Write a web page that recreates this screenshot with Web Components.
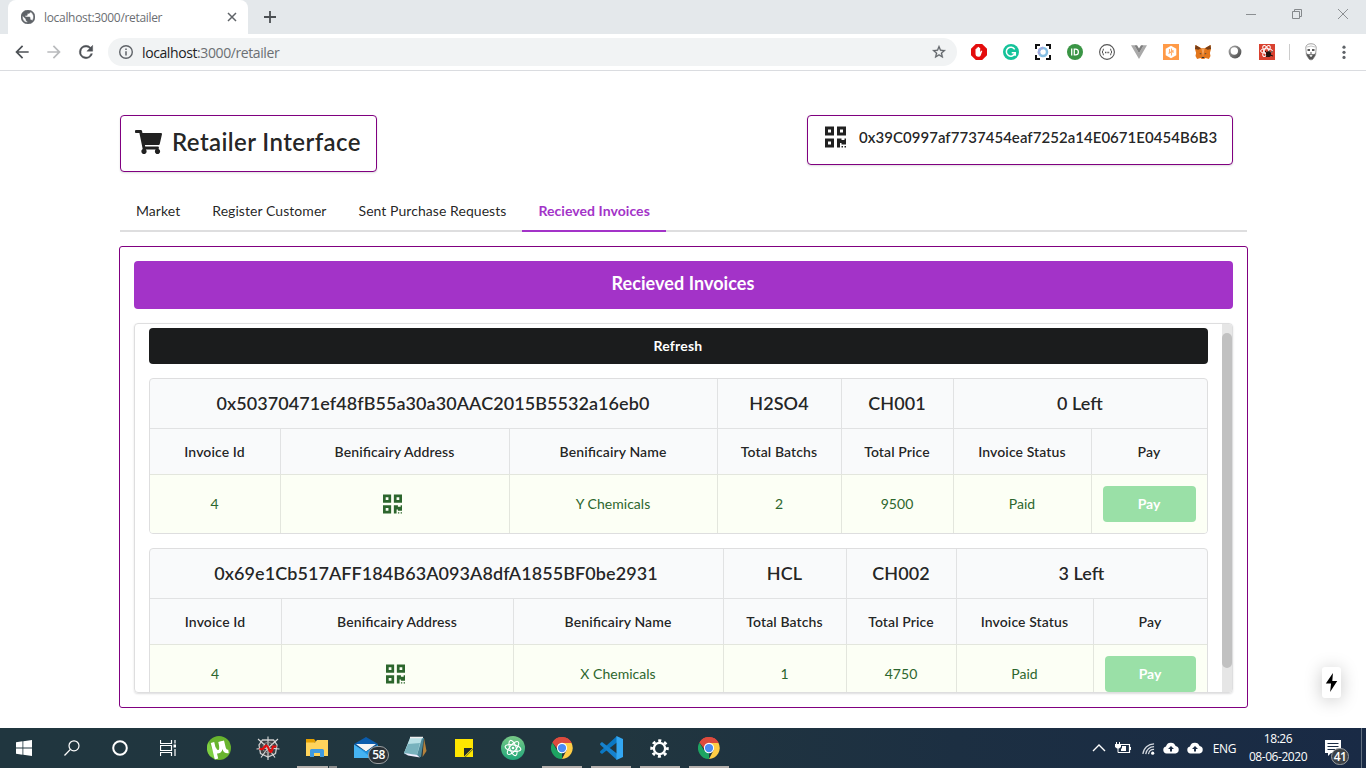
<!DOCTYPE html>
<html lang="en">
<head>
<meta charset="utf-8">
<title>localhost:3000/retailer</title>
<style>
html,body{margin:0;height:100%;overflow:hidden;background:#fff}
body{font-family:Lato,"Liberation Sans",sans-serif;font-size:14px;color:rgba(0,0,0,.87);font-feature-settings:"liga" 1}
</style>
</head>
<body>
<desktop-screen></desktop-screen>
<script>
const ICONS = {
  globe:['2 2 20 20','<path fill="#5f6368" stroke="#5f6368" stroke-width=".7" d="M12 2C6.480 2 2 6.480 2 12s4.480 10 10 10 10-4.480 10-10S17.520 2 12 2zm-1 17.930c-3.950-.49-7-3.850-7-7.930 0-.62.08-1.210.21-1.790L9 15v1c0 1.100.9 2 2 2v1.930zm6.900-2.540c-.26-.81-1-1.390-1.900-1.390h-1v-3c0-.55-.45-1-1-1H8v-2h2c.55 0 1-.45 1-1V7h2c1.100 0 2-.9 2-2v-.41c2.930 1.190 5 4.060 5 7.410 0 2.080-.8 3.970-2.100 5.390z"/>'],
  close:['0 0 10 10','<path d="M1 1 9 9M9 1 1 9" fill="none" stroke="#5f6368" stroke-width="1.5"/>'],
  plus:['0 0 14 14','<path d="M7 1V13M1 7H13" fill="none" stroke="#4b4f53" stroke-width="1.8"/>'],
  min:['0 0 12 12','<path d="M1 6.500H11" stroke="#8b8f92"/>'],
  restore:['0 0 12 12','<path d="M1.500 3.500H8.500V10.500H1.500ZM3.500 3.500V1.500H10.500V8.500H8.500" fill="none" stroke="#85898c"/>'],
  winclose:['0 0 12 12','<path d="M1 1 11 11M11 1 1 11" fill="none" stroke="#8b8f92"/>'],
  back:['0 0 24 24','<path fill="#4d5156" d="M20 11H7.830l5.590-5.590L12 4l-8 8 8 8 1.410-1.410L7.830 13H20v-2z"/>'],
  forward:['0 0 24 24','<path fill="#b9bbbd" d="M12 4l-1.410 1.410L16.170 11H4v2h12.170l-5.580 5.590L12 20l8-8z"/>'],
  reload:['0 0 24 24','<path fill="#4d5156" d="M17.650 6.350A7.960 7.960 0 0 0 12 4a8 8 0 1 0 7.730 10h-2.080A6 6 0 1 1 12 6c1.660 0 3.140.69 4.220 1.780L13 11h7V4z" stroke="#4d5156" stroke-width=".5"/>'],
  info:['0 0 16 16','<circle cx="8" cy="8" r="6.300" fill="none" stroke="#5f6368" stroke-width="1.400"/><path d="M8 7.200V11.600M8 4.400V6" stroke="#5f6368" stroke-width="1.500"/>'],
  star:['0 0 24 24','<path fill="#5f6368" stroke="#5f6368" stroke-width=".4" d="M22 9.240l-7.190-.62L12 2 9.190 8.630 2 9.240l5.460 4.730L5.820 21 12 17.270 18.180 21l-1.630-7.030L22 9.240zM12 15.400l-3.760 2.270 1-4.280-3.320-2.880 4.380-.38L12 6.100l1.710 4.040 4.380.38-3.320 2.880 1 4.280L12 15.400z"/>'],
  adblock:['0 0 16 16','<path fill="#e40d0d" d="M4.800 0h6.400L16 4.800v6.400L11.200 16H4.800L0 11.200V4.800Z"/><path fill="#fff" d="M4.500 8.400V5.200q.5-.7 1 0V4q.7-.8 1.200 0V3.200q.7-.8 1.300 0V4q.7-.8 1.200 0v4l1.200-1.300q.8-.3.9.3L9.800 11.200Q9.300 12.800 7.500 12.800 4.500 12.800 4.500 9.500Z"/>'],
  grammar:['0 0 16 16','<circle cx="8" cy="8" r="8" fill="#15c39a"/><path d="M11.700 5.300A4.500 4.500 0 1 0 12 9.400M8.700 8.800H12.300V11.800" fill="none" stroke="#fff" stroke-width="1.500"/>'],
  capture:['0 0 16 16','<path d="M1 5V1H5M11 1H15V5M15 11V15H11M5 15H1V11" fill="none" stroke="#111" stroke-width="2"/><circle cx="8" cy="8" r="4" fill="none" stroke="#85bfe3" stroke-width="2.500"/><path d="M8 4A4 4 0 0 0 5 10.800" fill="none" stroke="#a9a4dc" stroke-width="2.500" stroke-dasharray="2 1"/>'],
  pushb:['0 0 16 16','<circle cx="8" cy="8" r="8" fill="#3a9545"/><path d="M4.700 4.500V11.500M7.300 5.100H8.500A2.900 2.900 0 0 1 8.500 10.900H7.300Z" fill="none" stroke="#fff" stroke-width="1.300"/>'],
  json:['0 0 16 16','<circle cx="8" cy="8" r="7.400" fill="#fff" stroke="#555" stroke-width="1.100"/><path d="M5 5Q3.700 5 4 6.700L3.200 8 4 9.300Q3.700 11 5 11M11 5Q12.300 5 12 6.700L12.800 8 12 9.300Q12.300 11 11 11" fill="none" stroke="#555"/><path d="M6 8.500H10.200" stroke="#555" stroke-width="1.300" stroke-dasharray="1 .6"/>'],
  vue:['0 0 16 16','<path fill="#a9a9a9" d="M0 1.200H3.300L8 9.300 12.700 1.200H16L8 15Z"/><path fill="#7e7e7e" d="M3.300 1.200H6L8 4.600 10 1.200H12.700L8 9.300Z"/>'],
  hexa:['0 0 16 16','<rect width="16" height="16" fill="#ff9a47"/><path fill="#fff" d="M8 1.700 13.300 4.800V11.200L8 14.300 2.700 11.200V4.800Z"/><path d="M6.500 5V8.500M8.500 4.500V11.500M10 6V9M5.500 9.500 10.500 6.500" stroke="#ffad6a" fill="none" stroke-width="1.100"/>'],
  fox:['0 0 16 16','<path fill="#e2761b" d="M.5 1 6.300 4.300H9.700L15.500 1 16 5 14.900 9 15.500 12 13.900 15 10.500 14 9.200 15H6.800L5.500 14 2.100 15 .5 12 1.100 9 0 5Z"/><path fill="#763d16" d="M.5 1 6 4.300 3.300 5.700 0 5ZM15.500 1 10 4.300 12.700 5.700 16 5Z"/><path fill="#233447" d="M4.300 9.300 6.400 9.600 6 10.600ZM11.700 9.300 9.600 9.600 10 10.600ZM6.800 12.900H9.200V14H6.800Z"/><path fill="#f5a15a" d="M6.500 5 8 12.700 9.500 5Z"/>'],
  ring:['0 0 16 16','<defs><linearGradient id="g" x1="0" y1="0" x2="1" y2="1"><stop offset="0" stop-color="#aaa"/><stop offset="1" stop-color="#444"/></linearGradient></defs><circle cx="8" cy="8" r="6.400" fill="url(#g)"/><circle cx="7.300" cy="7" r="3.700" fill="#fff"/>'],
  ladybug:['0 0 16 16','<rect width="16" height="16" fill="#d9412f"/><g fill="none" stroke="#fff" stroke-width="1"><ellipse cx="7.500" cy="7" rx="6" ry="2.300"/><ellipse cx="7.500" cy="7" rx="6" ry="2.300" transform="rotate(60 7.500 7)"/><ellipse cx="7.500" cy="7" rx="6" ry="2.300" transform="rotate(120 7.500 7)"/></g><ellipse cx="9.500" cy="10.200" rx="2.600" ry="2.900" fill="#20130f"/><path d="M6 7 8 9M13.500 7 11 9.500M7 13 9 11M14 12 11 11M10.500 6.500 9.500 9" stroke="#20130f"/>'],
  face:['0 0 16 18','<path d="M3 7C2 2 5 .8 8 .8S14 2 13 7L12.600 12 10 16 8 17 6 16 3.400 12Z" fill="#fff" stroke="#888" stroke-width=".8"/><path d="M3.300 9.500 4.200 13 6.500 16.600H9.500L11.800 13 12.700 9.500 11.300 11.300H4.700Z" fill="#555"/><path d="M6.300 12.500Q8 11.600 9.700 12.500L8.500 13.800H7.500Z" fill="#fff"/><path d="M4.500 7H7M9 7H11.500M7.500 10H8.500" stroke="#222" stroke-width="1.300"/><path d="M4 4Q8 2 12 4" stroke="#aaa" fill="none" stroke-width=".7"/>'],
  dots:['0 0 16 16','<circle cx="8" cy="3.200" r="1.600" fill="#5f6368"/><circle cx="8" cy="8.300" r="1.600" fill="#5f6368"/><circle cx="8" cy="13.400" r="1.600" fill="#5f6368"/>'],
  cart:['0 0 576 512','<path fill="currentColor" d="M528.120 301.319l47.273-208C578.806 78.301 567.391 64 551.990 64H159.208l-9.166-44.810C147.758 8.021 137.930 0 126.529 0H24C10.745 0 0 10.745 0 24v16c0 13.255 10.745 24 24 24h69.883l70.248 343.435C147.325 417.100 136 435.222 136 456c0 30.928 25.072 56 56 56s56-25.072 56-56c0-15.674-6.447-29.835-16.824-40h209.647C430.447 426.165 424 440.326 424 456c0 30.928 25.072 56 56 56s56-25.072 56-56c0-22.172-12.888-41.332-31.579-50.405l5.517-24.276c3.413-15.018-8.002-29.319-23.403-29.319H218.117l-6.545-32h293.145c11.206 0 20.920-7.754 23.403-18.681z"/>'],
  qr:['0 0 448 512','<path fill="currentColor" d="M0 224h192V32H0v192zM64 96h64v64H64V96zm192-64v192h192V32H256zm128 128h-64V96h64v64zM0 480h192V288H0v192zm64-128h64v64H64v-64zm352-64h32v128h-96v-32h-32v96h-64V288h96v32h64v-32zm0 160h32v32h-32v-32zm-64 0h32v32h-32v-32z"/>'],
  bolt:['0 0 14 20','<path fill="#000" d="M8 0 .5 11H6L5 20 12.500 8.500H7.300Z"/>'],
  win:['0 0 16 16','<path fill="#fff" d="M0 2.200 6.500 1.300V7.600H0ZM7.300 1.200 16 0V7.600H7.300ZM0 8.400H6.500V14.700L0 13.800ZM7.300 8.400H16V16L7.300 14.800Z"/>'],
  search:['0 0 16 16','<circle cx="10" cy="5.800" r="5" fill="none" stroke="#fff" stroke-width="1.200"/><path d="M6.400 9.400.5 15.500" stroke="#fff" stroke-width="1.300"/>'],
  cortana:['0 0 16 16','<circle cx="8" cy="8" r="6.800" fill="none" stroke="#fff" stroke-width="2"/>'],
  tasks:['0 0 16 16','<path d="M.5 0V3.500H11.500V0M.5 16V12.500H11.500V16M.5 5.500H11.500V10.500H.5ZM15 0V3.500M15 9V16" fill="none" stroke="#fff" stroke-width="1.200"/><path fill="#fff" d="M13.500 4.500H16V7.500H13.500Z"/>'],
  ut:['0 0 24 24','<circle cx="12" cy="12" r="12" fill="#68b42e"/><path d="M1.500 6A12 12 0 0 0 3 20L10 23.500Z" fill="#7ed043"/><path d="M5.500 6.500 9.500 23M7.300 12Q9 17 12.500 15.200 15 13.800 13 5.500M15.300 5 17 12Q18 16 21.500 15.500" fill="none" stroke="#fff" stroke-width="3.500"/>'],
  web:['0 0 24 24','<path d="M6.500 4 17.500 4 21 9 19.500 17.500 12 21 4.500 17.500 3 9Z" fill="#3e4144" stroke="#ccc" stroke-width="1.300"/><path d="M12 12 12 .5M12 12 22 3M12 12 23.500 13M12 12 19 21.500M12 12V24M12 12 5 21.500M12 12 .5 13M12 12 2 3" stroke="#ddd" fill="none" stroke-width="1.100"/><path d="M12 6 16.500 8 17 14 12 17.500 7 14 7.500 8Z" stroke="#999" fill="none" stroke-width=".8"/><path d="M3.500 12.500Q6 14.500 8.500 11T13 13.500 17 10.500L20.500 10.500" fill="none" stroke="#e40e0e" stroke-width="2.200"/>'],
  folder:['0 0 24 24','<path fill="#e5a000" d="M1 3H9L11 5.500 9 7H1Z"/><path fill="#ffd45c" d="M1 6.500H10L12 4H23V20H1Z"/><path fill="#409ae0" d="M5 21V14.500Q5 13 6.500 13H17.500Q19 13 19 14.500V21H15V17H9V21Z"/>'],
  mail:['0 0 24 24','<path fill="#0a5cad" d="M0 8 12 1 24 8 12 15Z"/><path fill="#f4f4f4" d="M2 8H22L12 15.500Z"/><path fill="#2196e3" d="M0 8.500 12 15.500 24 8.500V22H0Z"/><path fill="#45b3f2" d="M0 8.500 18 22H0Z"/>'],
  note:['0 0 24 24','<path fill="#b5823c" d="M21 2 23.500 15 19.500 21Z"/><path fill="#4f8a9a" d="M7 2H21L18 21 1 18Z"/><path fill="#b9e0e5" d="M7 2H19L14 19 1 17Z"/><path fill="#78b2bd" d="M5 8 17 7 14 19 1 17Z"/><path fill="#eef" d="M1 17 14 19 17 21.500 5 19.500Z"/><path d="M7 1.500H20" stroke="#eee" stroke-width="1.500"/>'],
  sticky:['0 0 18 18','<path fill="#ffe600" d="M0 0H18V18H0Z"/><path fill="#222b2d" d="M9 9H18V9.500L9.500 18H9Z"/><path fill="#21353f" d="M18 9.500V18H9.500Z"/><path fill="#ffe600" d="M9 18V17.500L17.500 9H18V9.800L9.800 18Z"/><path fill="#ffe600" d="M10.500 18H18V10.500Z"/>'],
  atom:['0 0 24 24','<defs><linearGradient id="a" x2="0" y2="1"><stop stop-color="#78c987"/><stop offset="1" stop-color="#20a67a"/></linearGradient></defs><circle cx="12" cy="12" r="12" fill="url(#a)"/><g fill="none" stroke="#fff" stroke-width="1.100"><ellipse cx="12" cy="12" rx="8" ry="3.200" transform="rotate(10 12 12)"/><ellipse cx="12" cy="12" rx="8" ry="3.200" transform="rotate(70 12 12)"/><ellipse cx="12" cy="12" rx="8" ry="3.200" transform="rotate(130 12 12)"/></g><circle cx="12" cy="12" r="1.300" fill="#fff"/>'],
  chrome:['0 0 24 24','<path fill="#dd4b3e" d="M12 12 1.600 6A12 12 0 0 1 22.400 6Z"/><path fill="#1da462" d="M12 12 12 24A12 12 0 0 1 1.600 6L6.800 15Z"/><path fill="#ffcd46" d="M12 6.500 22.400 6.500A12 12 0 0 1 12 24L17 14.500Z"/><path fill="#dd4b3e" d="M12 6.500H22.600A12 12 0 0 0 1.600 6L7 13Z"/><circle cx="12" cy="12" r="5.600" fill="#fff"/><circle cx="12" cy="12" r="4.500" fill="#4c8bf5"/>'],
  code:['0 0 24 24','<path fill="#0a78c4" d="M18 0 2 14.500Q0 16 2 17.300L3 18 18.500 6Z"/><path fill="#1682ce" d="M18 24 2 9.500Q0 8 2 6.700L3 6 18.500 18Z"/><path fill="#33a7f2" d="M17.500 0 24 3V21L17.500 24Z"/>'],
  gear:['0 0 20 20','<circle cx="10" cy="10" r="5.900" fill="none" stroke="#fff" stroke-width="2.400"/><circle cx="10" cy="10" r="8.200" fill="none" stroke="#fff" stroke-width="3" stroke-dasharray="3.220" stroke-dashoffset="1.610"/>'],
  up:['0 0 14 10','<path d="M1 8 7 2 13 8" fill="none" stroke="#fff" stroke-width="1.400"/>'],
  battery:['0 0 16 12','<path d="M1.500 0V2.500M4.500 0V2.500M3 6V10.500H6" stroke="#fff" fill="none"/><path fill="#fff" d="M0 2H6V5L4 6.500H2L0 5Z"/><path d="M6 2.500H14.500V10.500H5" fill="none" stroke="#fff" stroke-width="1.200"/><path d="M7 4H11V9H6V6.500H7ZM15 5H16V8H15Z" fill="#fff"/>'],
  wifi:['0 0 14 14','<path d="M1 13A12 12 0 0 1 13 2M4 13A9 9 0 0 1 13 5M7 13A6 6 0 0 1 13 8" fill="none" stroke="#d5dae1" stroke-width="1.300"/><circle cx="11.500" cy="12" r="1.700" fill="#fff"/>'],
  cloud:['0 0 16 12','<path fill="#fff" d="M3.500 11.500A3.500 3.500 0 0 1 3 4.600 5 5 0 0 1 12.600 4 3.800 3.800 0 0 1 12.500 11.500Z"/><path fill="#1b2c44" d="M8 4 11 7H9V9.500H7V7H5Z"/>'],
  action:['0 0 16 16','<path fill="#fff" d="M0 0H16V13H6L3 16V13H0Z"/><path d="M2.500 3.500H13.500M2.500 6.500H13.500M2.500 9.500H10" stroke="#1b2c44"/>']
};
const define = (name, css, html) => customElements.define(name, class extends HTMLElement {
  constructor(){
    super();
    const t = document.createElement('template');
    t.innerHTML = `<style>*{box-sizing:border-box}${css}</style>${html}`;
    this.attachShadow({mode:'open'}).append(t.content.cloneNode(true));
  }
});

customElements.define('ui-icon', class extends HTMLElement {
  connectedCallback(){
    if (this.shadowRoot) return;
    const [box, body] = ICONS[this.getAttribute('name')];
    const w = this.getAttribute('w') || 16, h = this.getAttribute('h') || w;
    this.attachShadow({mode:'open'}).innerHTML =
      `<style>:host{display:block;flex:none;width:${w}px;height:${h}px}svg{display:block}</style>
       <svg width="${w}" height="${h}" viewBox="${box}">${body}</svg>`;
  }
});

define('tab-strip', `
:host{display:flex;height:34px;background:#e4e8eb;padding-left:8px;font:12px "Open Sans",sans-serif}
.tab{width:240px;background:#fff;border-radius:8px 8px 0 0;display:flex;align-items:center;padding:0 11px 0 13px}
.title{flex:1;margin-left:9px;color:#6b6e72;letter-spacing:-.32px}
.new{margin:10px 0 0 15px}
.win{margin-left:auto;display:flex;gap:34px;padding:8px 17px 0 0}`,
`<div class="tab"><ui-icon name="globe" w="14"></ui-icon><span class="title">localhost:3000/retailer</span><ui-icon name="close" w="10"></ui-icon></div>
<ui-icon class="new" name="plus" w="14"></ui-icon>
<div class="win"><ui-icon name="min" w="12"></ui-icon><ui-icon name="restore" w="12"></ui-icon><ui-icon name="winclose" w="12"></ui-icon></div>`);

define('nav-bar', `
:host{display:flex;height:37px;align-items:center;background:#fff;border-bottom:1px solid #dadce0;padding:0 0 0 12px;font:14px "Open Sans",sans-serif}
.nav{display:flex;gap:12px}
.omni{margin-left:12px;flex:none;width:849px;height:28px;border-radius:14px;background:#f1f3f4;display:flex;align-items:center;padding:0 10px}
.url{flex:1;margin-left:8px;color:#6b6f73;letter-spacing:-.4px}.url b{font-weight:400;color:#202124}
.ext{display:flex;gap:16px;margin-left:14px}
.sep{flex:none;width:1px;height:16px;background:#ccc;margin:0 13px 0 14px}
.menu{margin-left:17px}`,
`<div class="nav"><ui-icon name="back" w="20"></ui-icon><ui-icon name="forward" w="20"></ui-icon><ui-icon name="reload" w="20"></ui-icon></div>
<div class="omni"><ui-icon name="info" w="16"></ui-icon><span class="url"><b>localhost</b>:3000/retailer</span><ui-icon name="star" w="16"></ui-icon></div>
<div class="ext">${['adblock','grammar','capture','pushb','json','vue','hexa','fox','ring','ladybug'].map(n=>`<ui-icon name="${n}" w="16"></ui-icon>`).join('')}</div>
<div class="sep"></div><ui-icon name="face" w="16" h="18"></ui-icon><ui-icon class="menu" name="dots" w="16"></ui-icon>`);

define('ui-segment', `
:host{display:flex;border:1px solid purple;border-radius:4px;box-shadow:0 1px 2px rgba(34,36,38,.15);background:#fff}`, `<slot></slot>`);

define('page-header', `
:host{display:flex;justify-content:space-between;align-items:flex-start;margin:0 15px 0 1px}
.brand{width:257px;height:57px;padding:14px 0 0 14px;font-size:24px;font-weight:600;line-height:24px;letter-spacing:.4px;white-space:nowrap}
.brand span{margin-left:10px}
.acct{width:426px;height:50px;padding:9px 0 0 17px;font-size:15px;font-weight:600;line-height:24px;letter-spacing:.04px}
.acct span{margin-left:13px}`,
`<ui-segment class="brand"><ui-icon name="cart" w="27" h="24"></ui-icon><span>Retailer Interface</span></ui-segment>
<ui-segment class="acct"><ui-icon name="qr" w="21" h="24"></ui-icon><span>0x39C0997af7737454eaf7252a14E0671E0454B6B3</span></ui-segment>`);

define('tab-menu', `
:host{display:flex;height:41px;margin:19px 0 0 1px;border-bottom:2px solid #dededf;width:1127px}
span{display:block;height:41px;padding:11px 16px 0;line-height:17px;white-space:nowrap;letter-spacing:.06px}
span.on{border-bottom:2px solid #a333c8;color:#a333c8;font-weight:700}`,
`<span>Market</span><span>Register Customer</span><span>Sent Purchase Requests</span><span class="on">Recieved Invoices</span>`);

customElements.define('invoice-table', class extends HTMLElement {
  connectedCallback(){
    const [addr, sym, code, left] = this.dataset.head.split('|');
    const [id, who, batches, price] = this.dataset.row.split('|');
    this.attachShadow({mode:'open'}).innerHTML = `<style>
*{box-sizing:border-box}
:host{display:grid;flex:none;width:1059px;height:156px;grid-template-columns:${this.dataset.cols};grid-template-rows:49px 46px 59px;border:1px solid #dededf;border-radius:4px;overflow:hidden;background:#f9fafb}
div{display:flex;align-items:center;justify-content:center;border-left:1px solid #e1e2e3;border-top:1px solid #e1e2e3;font-weight:600;padding-right:1px;letter-spacing:.09px}
.h{font-size:18px;border-top:0;padding-bottom:2px;letter-spacing:.06px}.f{border-left:0}
.a{grid-column:span 3}.l{grid-column:span 2}
.p{background:#fcfff5;color:#2c662d;font-weight:400;border-color:#e3e6dd;padding-bottom:2px;letter-spacing:.03px}
.q{padding:0 5px 0 0}
.b{padding:0 11px 0 11px}
button{width:100%;height:36px;border:0;border-radius:4px;background:#9ae0a7;color:#fff;font:700 14px Lato,sans-serif;padding:0 1px 2px 0}
</style>
<div class="h f a">${addr}</div><div class="h">${sym}</div><div class="h">${code}</div><div class="h l">${left}</div>
<div class="f">Invoice Id</div><div>Benificairy Address</div><div>Benificairy Name</div><div>Total Batchs</div><div>Total Price</div><div>Invoice Status</div><div>Pay</div>
<div class="p f">${id}</div><div class="p q"><ui-icon name="qr" w="19" h="22"></ui-icon></div><div class="p">${who}</div><div class="p">${batches}</div><div class="p">${price}</div><div class="p">Paid</div><div class="p b"><button>Pay</button></div>`;
  }
});

define('invoice-panel', `
:host{display:flex;flex-direction:column;width:1129px;height:462px;margin-top:14px;border:1px solid purple;border-radius:3px;padding:14px}
.title{flex:none;height:48px;border-radius:4px;background:#a333c8;color:#fff;font-size:18px;font-weight:700;line-height:45px;text-align:center;padding-right:1px;letter-spacing:.05px}
.scroll{flex:none;height:370px;margin-top:14px;border:1px solid #dededf;border-radius:4px;box-shadow:0 1px 2px rgba(34,36,38,.15);display:flex;overflow:hidden}
.list{display:flex;flex-direction:column;gap:14px;padding:4px 14px 0;width:1087px;height:368px;overflow:hidden}
.refresh{flex:none;height:36px;width:1059px;border:0;border-radius:4px;background:#1b1c1d;color:#fff;font:700 14px Lato,sans-serif;letter-spacing:.2px;padding:0 1px 2px 0}
.track{width:10px;flex:none;background:#e6e6e6;padding-top:9px}
.thumb{height:335px;border-radius:5px;background:#c1c1c1}`,
`<div class="title">Recieved Invoices</div>
<div class="scroll"><div class="list"><button class="refresh">Refresh</button>
<invoice-table data-cols="130px 229px 208px 124px 112px 138px 116px" data-head="0x50370471ef48fB55a30a30AAC2015B5532a16eb0|H2SO4|CH001|0 Left" data-row="4|Y Chemicals|2|9500"></invoice-table>
<invoice-table data-cols="131px 232px 210px 123px 110px 137px 114px" data-head="0x69e1Cb517AFF184B63A093A8dfA1855BF0be2931|HCL|CH002|3 Left" data-row="4|X Chemicals|1|4750"></invoice-table>
</div><div class="track"><div class="thumb"></div></div></div>`);

define('dev-bolt', `
:host{position:absolute;right:25px;bottom:30px;width:19px;height:31px;border-radius:3px;background:#fff;box-shadow:0 2px 18px rgba(0,0,0,.22);display:flex;align-items:center;justify-content:center}`,
`<ui-icon name="bolt" w="14" h="19"></ui-icon>`);

const app = (n, w, open, extra='') => `<div class="app ${open||''}"><ui-icon name="${n}" w="${w}"></ui-icon>${extra}</div>`;
define('task-bar', `
:host{display:flex;height:40px;background:linear-gradient(90deg,#20363f 0,#21363f 45%,#1c2f42 70%,#192a45 100%);color:#fff;font:12px "Open Sans",sans-serif}
.sys{width:48px;display:flex;align-items:center;justify-content:center}
.apps{display:flex;padding-left:3px}
.app{width:49px;height:40px;display:flex;align-items:center;justify-content:center;position:relative;padding-right:2px}
.open::after{content:"";position:absolute;left:4px;right:5px;bottom:0;height:2px;background:#b5b0ad}
.stack::after{background:linear-gradient(90deg,#b5b0ad 31px,#20363f 31px,#20363f 32px,#8c8c8c 32px)}
.badge{position:absolute;border:1px solid #9a9ea1;background:#2b3237;border-radius:10px;text-align:center;font-weight:600}
.app .badge{left:26px;top:18px;width:21px;height:18px;font-size:12px;line-height:15px;letter-spacing:-.5px}
.tray{margin-left:auto;display:flex;align-items:center;padding-right:4px}
.lang{margin-left:10px;letter-spacing:-.4px}
.clock{margin-left:12px;width:60px;text-align:center;line-height:18px;letter-spacing:-.45px;white-space:nowrap}
.act{position:relative;margin-left:17px;margin-right:20px}
.act .badge{left:6px;top:8px;width:18px;height:17px;font-size:12px;line-height:15px;letter-spacing:-.5px;background:#3d4247}
.peek{width:1px;height:40px;background:#627080}`,
`<div class="sys"><ui-icon name="win"></ui-icon></div><div class="sys"><ui-icon name="search"></ui-icon></div><div class="sys"><ui-icon name="cortana"></ui-icon></div><div class="sys"><ui-icon name="tasks"></ui-icon></div>
<div class="apps">${app('ut',24)}${app('web',24)}${app('folder',24,'open stack')}${app('mail',24,'','<span class="badge">58</span>')}${app('note',24)}${app('sticky',18)}${app('atom',24)}${app('chrome',22,'open')}${app('code',24,'open')}${app('gear',19,'open')}${app('chrome',22,'open')}</div>
<div class="tray"><ui-icon name="up" w="14" h="10"></ui-icon><ui-icon style="margin-left:9px" name="battery" w="16" h="12"></ui-icon><ui-icon style="margin-left:11px" name="wifi" w="13"></ui-icon><ui-icon style="margin-left:8px" name="cloud" w="16" h="12"></ui-icon><ui-icon style="margin-left:8px" name="cloud" w="16" h="12"></ui-icon>
<span class="lang">ENG</span><div class="clock">18:26<br>08-06-2020</div><div class="act"><ui-icon name="action"></ui-icon><span class="badge">41</span></div><div class="peek"></div></div>`);

define('desktop-screen', `
:host{display:flex;flex-direction:column;width:1366px;height:768px;overflow:hidden}
main{flex:1;min-height:0;position:relative;padding:44px 118px 0 119px}`,
`<tab-strip></tab-strip><nav-bar></nav-bar>
<main><page-header></page-header><tab-menu></tab-menu><invoice-panel></invoice-panel><dev-bolt></dev-bolt></main>
<task-bar></task-bar>`);
</script>
</body>
</html>
